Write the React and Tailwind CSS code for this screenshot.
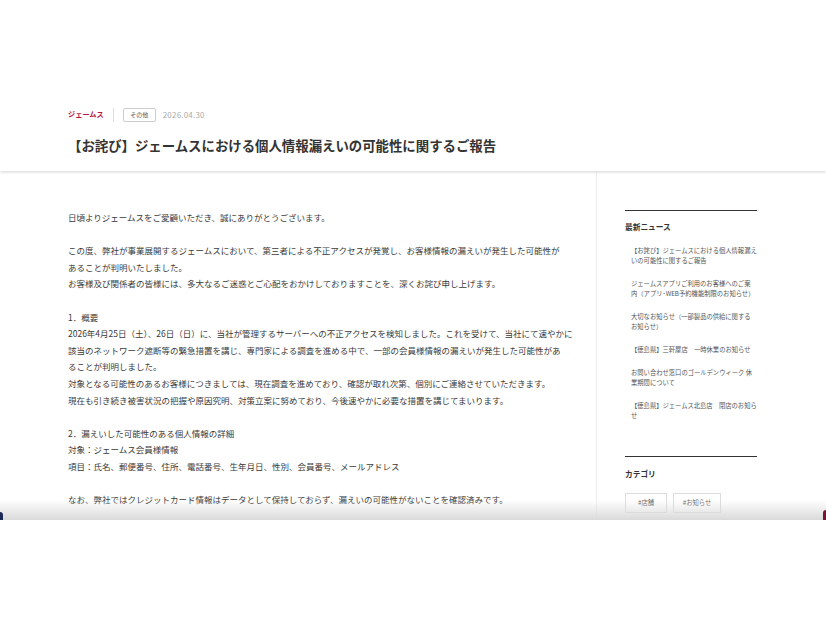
const font = { fontFamily: '"Noto Sans CJK JP", "Noto Sans", sans-serif' };

const body = [
  '日頃よりジェームスをご愛顧いただき、誠にありがとうございます。',
  '',
  'この度、弊社が事業展開するジェームスにおいて、第三者による不正アクセスが発覚し、お客様情報の漏えいが発生した可能性が',
  'あることが判明いたしました。',
  'お客様及び関係者の皆様には、多大なるご迷惑とご心配をおかけしておりますことを、深くお詫び申し上げます。',
  '',
  '1．概要',
  '2026年4月25日（土）、26日（日）に、当社が管理するサーバーへの不正アクセスを検知しました。これを受けて、当社にて速やかに',
  '該当のネットワーク遮断等の緊急措置を講じ、専門家による調査を進める中で、一部の会員様情報の漏えいが発生した可能性があ',
  'ることが判明しました。',
  '対象となる可能性のあるお客様につきましては、現在調査を進めており、確認が取れ次第、個別にご連絡させていただきます。',
  '現在も引き続き被害状況の把握や原因究明、対策立案に努めており、今後速やかに必要な措置を講じてまいります。',
  '',
  '2．漏えいした可能性のある個人情報の詳細',
  '対象：ジェームス会員様情報',
  '項目：氏名、郵便番号、住所、電話番号、生年月日、性別、会員番号、メールアドレス',
  '',
  'なお、弊社ではクレジットカード情報はデータとして保持しておらず、漏えいの可能性がないことを確認済みです。',
];

const news = [
  ['【お詫び】ジェームスにおける個人情報漏え', 'いの可能性に関するご報告'],
  ['ジェームスアプリご利用のお客様へのご案', '内（アプリ･WEB予約機能制限のお知らせ）'],
  ['大切なお知らせ（一部製品の供給に関する', 'お知らせ）'],
  ['【徳島県】三軒屋店　一時休業のお知らせ'],
  ['お問い合わせ窓口のゴールデンウィーク 休', '業期間について'],
  ['【徳島県】ジェームス北島店　閉店のお知ら', 'せ'],
];

export default function App() {
  return (
    <div className="w-[826px] h-[620px] bg-white overflow-hidden" style={font}>
      <div className="relative h-[520px] overflow-hidden bg-[#fdfdfd]">
        {/* 記事ヘッダー */}
        <header className="relative z-10 h-[171px] bg-white pl-[68px] pt-[108px] shadow-[0_1px_3px_rgba(0,0,0,0.18)]">
          <div className="flex items-center h-[14px]">
            <span className="text-[7.2px] font-bold text-[#b5173f] leading-none">ジェームス</span>
            <span className="ml-[9px] w-px h-[14px] bg-[#ddd]" />
            <span className="ml-[9px] w-[33px] h-[14px] border border-[#ccc] rounded-[2px] flex items-center justify-center text-[6px] text-[#555] leading-none">
              その他
            </span>
            <span className="ml-[7px] text-[8px] text-[#aaa] leading-none tracking-[0.2px]">2026.04.30</span>
          </div>
          <h1 className="mt-[13px] text-[13.4px] leading-[20px] font-bold text-[#333] whitespace-nowrap">
            【お詫び】ジェームスにおける個人情報漏えいの可能性に関するご報告
          </h1>
        </header>

        <div className="flex h-[349px]">
          {/* 本文 */}
          <main className="w-[597px] shrink-0 border-r border-[#eee] pl-[68px] pt-[38px] bg-white">
            {body.map((line, i) => (
              <div key={i} className="h-[16.6px] leading-[16.6px] text-[8.5px] text-[#3a3a3a] whitespace-nowrap">
                {line}
              </div>
            ))}
          </main>

          {/* サイドバー */}
          <aside className="flex-1 pl-[28px] pt-[39px] bg-white">
            <div className="w-[132px]">
              <div className="border-t-[1.5px] border-[#333]" />
              <h2 className="mt-[10px] text-[7.7px] leading-[12px] font-bold text-[#333]">最新ニュース</h2>
              <ul className="mt-[13px] flex flex-col gap-[13px] pl-[6px]">
                {news.map((lines, i) => (
                  <li key={i} className="text-[6.3px] leading-[10px] text-[#555] whitespace-nowrap">
                    {lines.map((l, j) => (
                      <div key={j}>{l}</div>
                    ))}
                  </li>
                ))}
              </ul>

              <div className="mt-[35px] border-t-[1.5px] border-[#333]" />
              <h2 className="mt-[11px] text-[7.7px] leading-[12px] font-bold text-[#333]">カテゴリ</h2>
              <div className="mt-[13px] flex flex-wrap gap-[6px]">
                <span className="w-[42px] h-[20px] border border-[#ddd] flex items-center justify-center text-[6.3px] text-[#666]">#店舗</span>
                <span className="w-[48px] h-[20px] border border-[#ddd] flex items-center justify-center text-[6.3px] text-[#666]">#お知らせ</span>
                <span className="w-[43px] h-[20px] border border-[#ddd]" />
              </div>
            </div>
          </aside>
        </div>

        {/* 下端の影 */}
        <div className="absolute left-0 right-0 bottom-0 h-[20px] bg-gradient-to-b from-white/0 to-[#dadada] z-20" />
        <div className="absolute left-0 bottom-0 w-[3px] h-[8px] bg-[#1d2a55] rounded-tr-[3px] z-30" />
        <div className="absolute right-0 bottom-0 w-[3px] h-[10px] bg-[#7a1436] rounded-tl-[3px] z-30" />
      </div>
    </div>
  );
}
